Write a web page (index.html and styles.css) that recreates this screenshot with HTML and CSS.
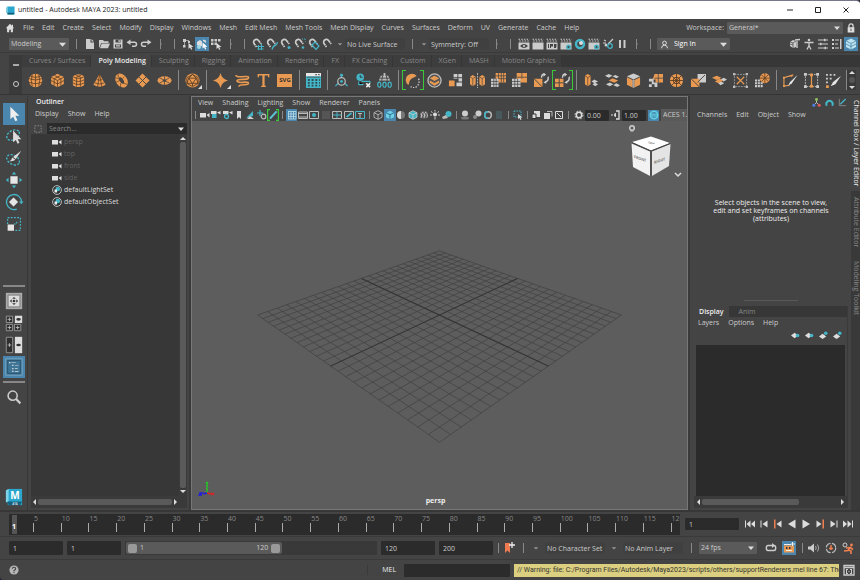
FILE: index.html
```html
<!DOCTYPE html>
<html lang="en">
<head>
<meta charset="utf-8">
<title>untitled - Autodesk MAYA 2023: untitled</title>
<link rel="stylesheet" href="styles.css">
</head>
<body>
<svg class="sprite" aria-hidden="true">
  <!-- general -->
  <symbol id="arrow" viewBox="0 0 8 8"><path fill="#ddd" d="M0 2h8L4 6.500z"/></symbol>
  <symbol id="caret" viewBox="0 0 8 8"><path fill="#999" d="M1 3h6L4 6z"/></symbol>
  <symbol id="home" viewBox="0 0 12 12"><path fill="#ddd" d="M6 1 1 6.200h1.500V11h2.500V8h2v3h2.500V6.200H11L9.600 4.700V2H8.300v1.400z"/></symbol>
  <symbol id="lock" viewBox="0 0 12 12"><path fill="none" stroke="#ddd" stroke-width="1.500" d="M3.500 6V3.500a2.500 2.500 0 0 1 5 0V6"/><path fill="#ddd" d="M2 5h8v6.500H2z"/><path fill="#444" d="M5.500 7h1v2.500h-1z"/></symbol>
  <symbol id="logo" viewBox="0 0 20 20"><path fill="#1a86a8" d="M1 4 4 1v15l-3-1z"/><path fill="#2ba6cc" d="M3 1h16v18H3z"/><path fill="#7fd3e8" d="M1 2.500 4 1v14l-3 1z"/><path fill="#14607d" d="M3 15h16l-2 4H4z"/></symbol>
  <!-- status line -->
  <symbol id="new" viewBox="0 0 12 12"><path fill="#ccc" d="M2 1h4.500v3.500H10V11H2zM7.500 1 10 3.500H7.500z"/></symbol>
  <symbol id="open" viewBox="0 0 12 12"><path fill="#ccc" d="M1 2h4l1 1.200h4.500V5H3.200L1.500 9.500H1z"/><path fill="#ccc" d="M3.700 5.600H12L10 10.200H2z"/></symbol>
  <symbol id="save" viewBox="0 0 12 12"><path fill="#ccc" d="M1.500 1.500h9v9h-9z"/><path fill="#444" d="M3.500 1.500h5v3h-5zM3 6.500h6v3H3z"/><path fill="#ccc" d="M6.500 2h1.200v2H6.500zM4 7.300h4v.6H4zM4 8.500h4v.6H4z"/></symbol>
  <symbol id="undo" viewBox="0 0 12 12"><path fill="none" stroke="#ccc" stroke-width="1.500" d="M3 4.200h5.500q2 0 2 2t-2 2H6"/><path fill="#ccc" d="M.5 4.200 4.500 1.500V7z"/></symbol>
  <symbol id="redo" viewBox="0 0 12 12"><path fill="none" stroke="#ccc" stroke-width="1.500" d="M9 4.200H3.500q-2 0-2 2t2 2H6"/><path fill="#ccc" d="M11.500 4.200 7.500 1.500V7z"/></symbol>
  <symbol id="sel1" viewBox="0 0 12 12"><path fill="#ccc" d="M1 1h3v3H1zM1 7h2.500v2.500H1zM6 3h2v2H6z"/><path stroke="#ccc" stroke-width=".7" fill="none" d="M2.500 3v5M3 2.500h4"/><path fill="#ddd" d="m6.500 5 5 4H9.300l1 2.300-1.200.5-1-2.300L6.500 11z"/></symbol>
  <symbol id="sel2" viewBox="0 0 12 12"><path fill="#ddd" d="M1 7V4l3-2 2 1.500V8L3 9zM7 3V1.500l3 1V5L8.500 4z"/><circle cx="3" cy="9" r="2" fill="#9fd6e6"/><path fill="#fff" d="m6.500 4.500 5 4.200H9.300l1 2.300-1.200.5-1-2.300-1.600 1.300z"/></symbol>
  <symbol id="sel3" viewBox="0 0 12 12"><path fill="#ccc" d="M1 1h2.500v2.500H1zM4.500 1H7v2.500H4.500zM8 1h2.500v2.500H8zM1 4.500h2.500V7H1zM4.500 4.500H7V7H4.500z"/><path fill="#ddd" d="m6.500 5 5 4H9.300l1 2.300-1.200.5-1-2.300L6.500 11z"/></symbol>
  <symbol id="mag" viewBox="0 0 12 12"><path fill="none" stroke="#ccc" stroke-width="1.700" d="M4.500 9 2.200 5.800a2.700 2.700 0 0 1 4.300-3.300L9.200 6"/><path fill="none" stroke="#444" stroke-width=".7" d="m2.600 8.300 2-1.500M7.300 5.600l2-1.500"/></symbol>
  <symbol id="maggrid" viewBox="0 0 12 12"><use href="#mag"/><path stroke="#44b5c6" fill="none" d="M5 8.500h7M5.500 11h6M6.500 7v5M9.500 6v6"/></symbol>
  <symbol id="magcurve" viewBox="0 0 12 12"><use href="#mag"/><path stroke="#44b5c6" stroke-width="1.300" fill="none" d="M6 11.500Q7 8 9 7.500T11.500 4"/></symbol>
  <symbol id="magpoint" viewBox="0 0 12 12"><use href="#mag"/><circle cx="9" cy="9.500" r="1.500" fill="#44b5c6"/></symbol>
  <symbol id="magcenter" viewBox="0 0 12 12"><use href="#mag"/><circle cx="9" cy="9.500" r="1.300" fill="#44b5c6"/><path stroke="#44b5c6" stroke-dasharray="1 1" d="M8 1h4v4" fill="none"/></symbol>
  <symbol id="magplane" viewBox="0 0 12 12"><use href="#mag"/><path stroke="#44b5c6" stroke-width="1.200" fill="none" d="m4 7 3-3 4 4-3 3.500z"/></symbol>
  <symbol id="clap" viewBox="0 0 12 12"><path fill="#ccc" d="M.5 4.500h11v7H.500z"/><path stroke="#ccc" stroke-width="1.100" stroke-dasharray="1.500 1.200" d="M.5 1.200h11M1.200 3h10.500"/></symbol>
  <symbol id="clapeye" viewBox="0 0 12 12"><use href="#clap"/><path fill="#444" d="M2 8q4-4 8 0-4 4-8 0z"/><circle cx="6" cy="8" r="1" fill="#ddd"/></symbol>
  <symbol id="clapipr" viewBox="0 0 12 12"><use href="#clap"/><path fill="#444" d="M2 6h1v4H2zM4 6h3v2.500H5V10H4zM8 6h2.500v2L10 10H8z"/></symbol>
  <symbol id="clapset" viewBox="0 0 12 12"><use href="#clap"/><circle cx="8.500" cy="9" r="2.500" fill="#44b5c6"/><circle cx="8.500" cy="9" r="1" fill="#444"/></symbol>
  <symbol id="hyper" viewBox="0 0 12 12"><circle cx="6" cy="6" r="4" fill="none" stroke="#44b5c6" stroke-width="2.500"/><circle cx="7" cy="5" r="2" fill="#ddd"/></symbol>
  <symbol id="lights" viewBox="0 0 12 12"><path stroke="#ccc" stroke-width="1.200" d="m11 1-5 5M1 5h3M2 2l2 1"/><circle cx="4" cy="7" r="1.500" fill="#ccc"/><circle cx="8" cy="8" r="2.300" fill="none" stroke="#44b5c6" stroke-width="1.300"/></symbol>
  <symbol id="pause" viewBox="0 0 12 12"><path fill="#ccc" d="M3 2h2v8H3zM7.500 2h2v8h-2z"/></symbol>
  <symbol id="user" viewBox="0 0 12 12"><path fill="none" stroke="#ddd" stroke-width="1.300" d="M2 11q0-4 4-4t4 4"/><circle cx="6" cy="4" r="2.500" fill="none" stroke="#ddd" stroke-width="1.300"/></symbol>
  <symbol id="toolkit" viewBox="0 0 12 12"><path fill="#ccc" d="m1 4 3-2 3 1v6L4 10 1 8z"/><path stroke="#444" stroke-width=".7" fill="none" d="M1 4l3 1 3-2M4 5v5M1 6l3 1"/><path fill="none" stroke="#ccc" stroke-width="1.400" d="M8 10V3M6 2l5-.5"/></symbol>
  <symbol id="human" viewBox="0 0 12 12"><circle cx="6" cy="2" r="1.300" fill="#ccc"/><path stroke="#ccc" stroke-width="1.300" fill="none" d="M1.500 4.500h9M6 4v3.500L4 11.500M6 7.500l2 4"/></symbol>
  <symbol id="attr" viewBox="0 0 12 12"><path stroke="#ccc" fill="none" d="M1 2h10M1 6h10M1 10h10"/><path fill="#ccc" d="M7 .7h1.500v2.600H7zM3 4.700h1.500v2.600H3zM7.500 8.700H9v2.600H7.500z"/></symbol>
  <symbol id="toolset" viewBox="0 0 12 12"><path fill="#ccc" d="M1 1h2v2H1zM1 5h2v2H1zM1 9h2v2H1zM4 1.500h4v1H4zM4 5.500h3v1H4zM4 9.500h4v1H4zM9 1h1.500v10H9z"/></symbol>
  <symbol id="chbox" viewBox="0 0 12 12"><path fill="#bfe3ef" d="m6 .5 5 2.500v6L6 11.500 1 9V3z"/><path stroke="#4a86ae" stroke-width=".8" fill="none" d="m1 3 5 2.500L11 3M6 5.500v6M1 6l5 2.500L11 6"/></symbol>
  <!-- shelf -->
  <symbol id="sphere" viewBox="0 0 16 16"><circle cx="8" cy="8" r="7.200" fill="#e99a52"/><path stroke="#553a22" stroke-width=".8" fill="none" d="M1 6q7 3 14 0M1 10q7 3 14 0M2.500 3.500Q8 6 13.500 3.500M8 1v14M4.500 2q-2 6 0 12M11.500 2q2 6 0 12"/></symbol>
  <symbol id="cube" viewBox="0 0 16 16"><path fill="#e99a52" d="m8 .8 6.800 3.500v7.500L8 15.200l-6.800-3.400V4.300z"/><path stroke="#553a22" stroke-width=".8" fill="none" d="M1 4.300 8 8l7-3.700M8 8v7M1 8l7 3.700L15 8M4.600 2.500l7 3.700v7M11.400 2.500l-7 3.700v7"/></symbol>
  <symbol id="cyl" viewBox="0 0 16 16"><path fill="#e99a52" d="M2 3.500q6-4.500 12 0v9.500q-6 4-12 0z"/><path stroke="#553a22" stroke-width=".8" fill="none" d="M2 4q6 3.500 12 0M2 7.300q6 3.500 12 0M2 10.500q6 3.500 12 0M6 5.500v9M10 5.500v9M5 2l6 3M11 2 5 5"/></symbol>
  <symbol id="cone" viewBox="0 0 16 16"><path fill="#e99a52" d="m8 1 6.500 11.500Q8 17 1.500 12.500z"/><path stroke="#553a22" stroke-width=".8" fill="none" d="M5 7q3 1.500 6 0M3 10.500q5 2.500 10 0M8 1 6 15M8 1l2.500 14"/></symbol>
  <symbol id="torus" viewBox="0 0 16 16"><ellipse cx="8" cy="8" rx="4" ry="6" transform="rotate(-35 8 8)" fill="none" stroke="#e99a52" stroke-width="4"/><path stroke="#553a22" stroke-width=".7" d="m1 5 4 1M4 1l1 4M11 4 9 6M2 10l4-2M7 15l0-4M14 12l-4-1"/></symbol>
  <symbol id="plane" viewBox="0 0 16 16"><path fill="#e99a52" d="m8 .5 7.500 7.500L8 15.500.500 8z"/><path stroke="#444" d="m4.300 4.300 7.500 7.500M11.700 4.300l-7.500 7.500"/></symbol>
  <symbol id="disc" viewBox="0 0 16 16"><ellipse cx="8" cy="8" rx="7.500" ry="4.500" fill="#e99a52"/><path stroke="#444" stroke-width=".8" d="M8 3.500v9M2.500 5l11 6M13.500 5l-11 6"/><ellipse cx="8" cy="8" rx="2" ry="1.200" fill="#444"/></symbol>
  <symbol id="plato" viewBox="0 0 16 16"><circle cx="8" cy="8" r="7.500" fill="#e99a52"/><path stroke="#553a22" stroke-width=".9" fill="none" d="M8 1.500 14 5v6l-6 3.500L2 11V5zM4 5.500h8l-4 6zM8 1.500 4 5.500 2 11h6M8 1.500l4 4 2 5.500H8v3"/></symbol>
  <symbol id="star" viewBox="0 0 16 16"><path fill="#e99a52" d="M8 0q1.500 6.500 8 8-6.500 1.500-8 8-1.500-6.500-8-8 6.500-1.500 8-8z"/></symbol>
  <symbol id="helix" viewBox="0 0 16 16"><path fill="none" stroke="#e99a52" stroke-width="1.700" d="M1 2q0 2.500 6 2t7 0q2 3-5 2.800T2 8.500q1 2 6 1.500t6 0q1.500 2.500-4 2.500t-6 2"/></symbol>
  <symbol id="type" viewBox="0 0 16 16"><path fill="none" stroke="#e99a52" stroke-width="1.500" d="M2.500 4.500V1.800h11v2.700M5.500 14.300h5"/><path fill="#e99a52" d="M6.800 1.500h2.400v13H6.800z"/></symbol>
  <symbol id="svgbox" viewBox="0 0 16 16"><path fill="#e99a52" d="M0 1h16v14H0z"/></symbol>
  <symbol id="sheet" viewBox="0 0 16 16"><path fill="#44b5c6" d="M0 0h16v16H0z"/><path fill="#e8e8e8" d="M0 0h16v3.500H0z"/><path fill="#444" d="M10 1h1.500v1.500H10zM13 1h1.500v1.500H13zM1 4h14v.8H1z"/><path stroke="#2f4a50" stroke-width="2" stroke-dasharray="2 2" d="M2 7.500h13M2 10.500h13M2 13.500h13"/></symbol>
  <symbol id="pivot" viewBox="0 0 16 16"><path stroke="#44b5c6" stroke-width="1.400" fill="none" d="M8 5V1M5 10.500 1.500 14M11 10.500l3.500 3.500M8 1 6.500 3M8 1l1.500 2"/><circle cx="8" cy="9" r="4" fill="none" stroke="#bbb" stroke-width="1.300"/><circle cx="8" cy="9" r="1.500" fill="#44b5c6"/></symbol>
  <symbol id="history" viewBox="0 0 16 16"><circle cx="4.500" cy="4.500" r="4" fill="#44b5c6"/><path stroke="#333" fill="none" d="M4.500 2v2.500h2.500"/><path stroke="#44b5c6" stroke-width="1.300" d="M6 9h9M3 9v3.500h5M15 9v2"/><path stroke="#eee" stroke-width="1.700" d="m11 11 4 4M15 11l-4 4"/></symbol>
  <symbol id="freeze" viewBox="0 0 16 16"><path fill="#bbb" d="M4 3h8l2 5H2zM7 0h2v3H7z"/><path stroke="#444" d="M6 3 5 8M10 3l1 5M3 5.500h10"/><g fill="none" stroke="#44b5c6" stroke-width="1.300"><ellipse cx="2.500" cy="12.500" rx="1.700" ry="2.700"/><ellipse cx="8" cy="12.500" rx="1.700" ry="2.700"/><ellipse cx="13.500" cy="12.500" rx="1.700" ry="2.700"/></g></symbol>
  <symbol id="sweep" viewBox="0 0 16 16"><path fill="#e99a52" d="M12.500 3.200Q9.500-.3 5 1.200T.8 8.500Q1.500 12 4 12.500 4 8.500 6.500 6.500t6-3.300z"/><path stroke="#ccc" stroke-width="1.500" stroke-dasharray="1.500 1.500" fill="none" d="M14.500 6q1.500 5-1.500 8T6 14.500"/></symbol>
  <symbol id="smooth" viewBox="0 0 16 16"><circle cx="8" cy="8" r="7" fill="#555" stroke="#bbb" stroke-width="1.400"/><path fill="#e99a52" d="m8 3 5 2.500L8 8.500 3 5.500z"/><path fill="#e99a52" d="m3 8 5 2.700L13 8v2.500l-5 3-5-3z"/></symbol>
  <symbol id="combine" viewBox="0 0 16 16"><path fill="#ccc" d="M6 1h9v8h-4V6H6zM9 10h6v4H9z"/><path fill="#e99a52" d="M1 8h6v6H1z"/><path stroke="#444" d="M10.500 1v9M6 5h9"/></symbol>
  <symbol id="mirror" viewBox="0 0 16 16"><path fill="#e99a52" d="m0 4 3-2 3 2v8l-3 2-3-2zM10 4l3-2 3 2v8l-3 2-3-2z"/><path stroke="#444" stroke-width=".7" fill="none" d="m0 4 3 2 3-2M3 6v8M10 4l3 2 3-2M13 6v8"/><path stroke="#bbb" stroke-dasharray="2 1" d="M8 0v16"/></symbol>
  <symbol id="fill" viewBox="0 0 16 16"><path fill="#e99a52" d="M5 0h11v10H5z"/><path fill="#ccc" d="M0 6h8v9H0z"/><path stroke="#444" stroke-width=".8" d="M8 0v6M11 0v10M13.500 0v10M5 3h11M8 6h8M0 9h8M0 12h8M3 6v9M5.500 6v9"/></symbol>
  <symbol id="reduce" viewBox="0 0 16 16"><path fill="#e99a52" d="M5 0h11v10H5z"/><path fill="#ccc" d="M0 6h9v9H0z"/><path stroke="#444" stroke-width=".8" d="M10.500 0v6M5 4.500h11M0 9h9M0 12h9M3 6v9M6 6v9"/></symbol>
  <symbol id="remesh" viewBox="0 0 16 16"><path fill="#e99a52" d="M0 6h9v9H0z"/><path stroke="#444" d="m0 6 9 9"/><path stroke="#ccc" stroke-width="1.500" fill="none" d="M8 5q0-4 3.500-4M15 4q1 4-3 6"/><path fill="#ccc" d="m10 0 3 1.500L10 4zM13 8v3.500L10 10z"/></symbol>
  <symbol id="retopo" viewBox="0 0 16 16"><path fill="#e99a52" d="M0 6h9v9H0z"/><path stroke="#444" d="M4.500 6v9M0 10.500h9"/><path stroke="#ccc" stroke-width="1.500" fill="none" d="M8 5q0-4 3.500-4M15 4q1 4-3 6"/><path fill="#ccc" d="m10 0 3 1.500L10 4zM13 8v3.500L10 10z"/></symbol>
  <symbol id="extrude" viewBox="0 0 16 16"><path fill="#e99a52" d="m1 3 3-2 3 2v9l-3 2-3-2z"/><path stroke="#553a22" stroke-width=".7" fill="none" d="m1 3 3 2 3-2M4 5v9"/><path fill="#ccc" d="m11 7 4 2-4 2-3-2zM9 12l3-1.500 3 1.500-3 2z"/></symbol>
  <symbol id="bridge" viewBox="0 0 16 16"><path fill="#ccc" d="m4 1 4 2-4 2-4-2zM11 2l4 2-3 1.500-4-2zM5 10l4 2-4 2-4-2zM12 11l4 2-3 2-4-2z"/><path fill="#e99a52" d="m8 5.500 6 2.500-4 2.500L4 8z"/></symbol>
  <symbol id="bevel" viewBox="0 0 16 16"><path fill="#ccc" d="m8 .5 7 3L8 7 1 3.500z"/><path fill="#e99a52" d="m1 4.500 6 3v8l-6-3zM9 7.500l6-3v8l-6 3z"/><path fill="#fff" d="m7 7.500 1-.5 1 .5v8l-1 .5-1-.5z" opacity=".5"/></symbol>
  <symbol id="boolean" viewBox="0 0 16 16"><path fill="#e99a52" d="M7 1h9v9H8V7H5z"/><path fill="#ccc" d="M1 6h5v4h4v5H7v-3H4v3H1v-3h3V9H1z"/><path stroke="#444" stroke-width=".8" d="M11 1v9M7 5.500h9"/></symbol>
  <symbol id="circularize" viewBox="0 0 16 16"><circle cx="8" cy="8" r="7" fill="#e99a52"/><circle cx="8" cy="8" r="3.500" fill="none" stroke="#553a22"/><path stroke="#553a22" stroke-width=".9" d="M8 1v14M1 8h14M3 3l10 10M13 3 3 13"/></symbol>
  <symbol id="tri" viewBox="0 0 16 16"><path fill="#ccc" d="M7 1h9v9H7z"/><path fill="#e99a52" d="M0 6h9v9H0z"/><path stroke="#444" d="m0 6 9 9M15 2l-8 8"/></symbol>
  <symbol id="append" viewBox="0 0 16 16"><path fill="#ccc" d="m9 7 3.500-2L16 7l-3.500 2zM6 10l3-1.500L13 11l-4 2z"/><path fill="#e99a52" d="m5 3 5 2-5 2.500L0 5zM3 9l5-3 4 2-5 3z"/></symbol>
  <symbol id="collapse" viewBox="0 0 16 16"><path fill="none" stroke="#999" stroke-dasharray="2 1" d="M1.500 1.500h13v13h-13z"/><path fill="#bbb" d="M0 0h2.500v2.500H0zM13.500 0H16v2.500h-2.500zM0 13.500h2.500V16H0zM13.500 13.500H16V16h-2.500z"/><path stroke="#e99a52" stroke-width="1.200" d="m4 4 8 8M12 4l-8 8"/></symbol>
  <symbol id="project" viewBox="0 0 16 16"><circle cx="10.500" cy="5.500" r="5.300" fill="#e99a52"/><path stroke="#553a22" stroke-width=".8" d="M10.500 0v11M5 5.500h11M7 2l7 7M14 2 7 9"/><path stroke="#ccc" stroke-width="2.200" stroke-dasharray="2.200 .8" d="M0 8h6M0 11h9M0 14h9"/></symbol>
  <symbol id="multicut" viewBox="0 0 16 16"><path stroke="#e99a52" stroke-width="1.200" fill="none" d="M1 14V5l10-3M1 14l6-1"/><path fill="#e99a52" d="M0 4h2v2H0zM0 13h2v2H0zM8 2h2v2H8z"/><path fill="#e5e5e5" d="m15.500 2-6 9-4 2.500 2-4z"/></symbol>
  <symbol id="connect" viewBox="0 0 16 16"><path fill="none" stroke="#bbb" stroke-dasharray="2 1" d="M1.500 1.500h13v13h-13z"/><path fill="#ccc" d="M0 0h3v3H0zM13 0h3v3h-3zM0 13h3v3H0zM13 13h3v3h-3z"/><path stroke="#e99a52" stroke-width="1.300" d="M8 3v10"/><circle cx="8" cy="2" r="1.800" fill="#e99a52"/><circle cx="8" cy="14" r="1.800" fill="#e99a52"/></symbol>
  <symbol id="quaddraw" viewBox="0 0 16 16"><path fill="#ccc" d="M0 1h2v2H0zM4 1h2v2H4zM8 1h2v2H8zM0 5h2v2H0zM4 5h2v2H4zM0 9h2v2H0z"/><path fill="#e99a52" d="M0 13h3v3H0z"/><path fill="#e5e5e5" d="m16 3-6 9-5 2 2.500-4.500z"/></symbol>
  <!-- viewport bar -->
  <symbol id="cam" viewBox="0 0 10 10"><path fill="#ddd" d="M0 3h6v4.500H0zM6.500 5 9.500 3v4.500z"/></symbol>
  <symbol id="camlock" viewBox="0 0 10 10"><path fill="#ddd" d="M0 1h5.500v3H0zM6 2.500 9.500 1v3.500z"/><path fill="#44b5c6" d="M1 4h4.500v4H1z"/></symbol>
  <symbol id="camattr" viewBox="0 0 10 10"><path fill="#ddd" d="M0 1h5.500v3H0zM6 2.500 9.500 1v3.500z"/><circle cx="3.500" cy="6.500" r="2" fill="none" stroke="#44b5c6" stroke-width="1.300"/></symbol>
  <symbol id="mark" viewBox="0 0 10 10"><path fill="#ddd" d="M3 1h4v8L5 7 3 9z"/></symbol>
  <symbol id="imgplane" viewBox="0 0 10 10"><path fill="#44b5c6" d="M1 8 8 1v5z"/><path fill="#ccc" d="m2 9 3-3 4 3z"/></symbol>
  <symbol id="panzoom" viewBox="0 0 10 10"><path stroke="#44b5c6" d="M0 3h6M3 0v6" stroke-width="1.200"/><circle cx="6.500" cy="6.500" r="2.300" fill="none" stroke="#bbb" stroke-width="1.200"/></symbol>
  <symbol id="grease" viewBox="0 0 10 10"><path stroke="#3cc83c" fill="none" d="M2.500.500h-2v9h2M7.500.500h2v9h-2"/><path stroke="#5cc4d4" stroke-width="1.700" d="M2.500 8 8 2"/></symbol>
  <symbol id="gridon" viewBox="0 0 10 10"><path stroke="#b9ddea" fill="none" d="M1 1.500h8M1 4h8M1 6.500h8M1 9h8M1.500 1v8M4 1v8M6.500 1v8M9 1v8" stroke-width=".8"/></symbol>
  <symbol id="gate" viewBox="0 0 10 10"><path stroke="#bbb" fill="none" d="M.5 2h9v6.500h-9zM.5 3.500h9M.5 7h9"/></symbol>
  <symbol id="gate2" viewBox="0 0 10 10"><path stroke="#bbb" fill="none" d="M.5 1.500h9v7h-9z"/><circle cx="5" cy="5" r="2" fill="#44b5c6"/></symbol>
  <symbol id="dimsq" viewBox="0 0 10 10"><path fill="#555" d="M1 1h8v8H1z"/></symbol>
  <symbol id="chart" viewBox="0 0 10 10"><path stroke="#bbb" fill="none" d="M.5 1.500h9v7h-9z"/><path stroke="#44b5c6" d="M5 2v6M1 5h8"/></symbol>
  <symbol id="action" viewBox="0 0 10 10"><path stroke="#bbb" fill="none" d="M.5 1.500h9v7h-9z"/><path stroke="#44b5c6" stroke-width="1.700" d="m2.500 7 5-4"/></symbol>
  <symbol id="title" viewBox="0 0 10 10"><path stroke="#44b5c6" fill="none" d="M.5 1.500h9v7h-9z"/><path stroke="#bbb" d="M3 3.500h4M5 3.500V8"/></symbol>
  <symbol id="wire" viewBox="0 0 10 10"><path stroke="#aaa" fill="none" d="m5 .7 4 2v4.600l-4 2-4-2V2.700zM1 2.700l4 2 4-2M5 4.700v4.600"/></symbol>
  <symbol id="shade" viewBox="0 0 10 10"><path fill="#6fd0e4" d="m5 .7 4 2v4.600l-4 2-4-2V2.700z"/><path stroke="#1f5c80" fill="none" stroke-width=".8" d="m1 2.700 4 2 4-2M5 4.700v4.600"/></symbol>
  <symbol id="half" viewBox="0 0 10 10"><circle cx="5" cy="5" r="4" fill="#777"/><path fill="#ddd" d="M5 1a4 4 0 0 0 0 8z"/></symbol>
  <symbol id="tex" viewBox="0 0 10 10"><path fill="#44b5c6" d="m5 .7 4 2v4.600l-4 2-4-2V2.700z"/><path stroke="#ccc" fill="none" stroke-width=".8" d="m5 .7 4 2v4.600l-4 2-4-2V2.700zM1 2.700l4 2 4-2M5 4.700v4.600"/></symbol>
  <symbol id="checker" viewBox="0 0 10 10"><circle cx="5" cy="5" r="4" fill="#555"/><path stroke="#bbb" stroke-width="1.500" stroke-dasharray="1.500 1.500" d="M3 2.500h5M1.500 4h7M2 5.500h7M1.500 7h7"/></symbol>
  <symbol id="light" viewBox="0 0 10 10"><circle cx="5" cy="4.500" r="2" fill="#ddd"/><path stroke="#ccc" d="M5 0v1.500M1 1.500l1.500 1M9 1.500l-1.500 1M0 5h2M8 5h2M5 7v2.500"/></symbol>
  <symbol id="shadow" viewBox="0 0 10 10"><circle cx="6.500" cy="4" r="3" fill="#44b5c6"/><path fill="#bbb" d="m0 7 4-2 2 3-5 1z"/></symbol>
  <symbol id="ao" viewBox="0 0 10 10"><circle cx="5" cy="3.500" r="3" fill="#ccc"/><ellipse cx="5" cy="8" rx="4" ry="1.500" fill="#777"/></symbol>
  <symbol id="blur" viewBox="0 0 10 10"><circle cx="6.500" cy="3.500" r="3" fill="#ccc"/><circle cx="3" cy="7" r="2" fill="#888"/></symbol>
  <symbol id="aa" viewBox="0 0 10 10"><circle cx="5" cy="5" r="3.300" fill="none" stroke="#bbb" stroke-width="1.500"/><path fill="none" stroke="#44b5c6" stroke-width="1.500" d="M5 8.300A3.300 3.300 0 0 1 5 1.700"/></symbol>
  <symbol id="dof" viewBox="0 0 10 10"><path fill="#47595c" d="M2 1h6v8H2z"/></symbol>
  <symbol id="isolate" viewBox="0 0 10 10"><path stroke="#44b5c6" stroke-dasharray="1.500 1" fill="none" d="M1 1h7v6H1z"/><path fill="#ddd" d="m5 4 4.500 3.500H7.500l1 2-1 .5-1-2L5 9z"/></symbol>
  <symbol id="xray" viewBox="0 0 10 10"><path fill="#ddd" d="M3 1h6v6H3z"/><path fill="#ddd" stroke="#333" d="M1 4h4v4.500H1z"/></symbol>
  <symbol id="xray2" viewBox="0 0 10 10"><path stroke="#bbb" fill="none" d="M4 1.500h5v5"/><path fill="#ddd" d="M1 3h6v6H1z"/></symbol>
  <symbol id="xray3" viewBox="0 0 10 10"><path stroke="#ddd" fill="none" d="M1.500 1.500h7v7h-7zM3 3l4 4"/></symbol>
  <symbol id="gear" viewBox="0 0 10 10"><circle cx="5" cy="5" r="2.700" fill="none" stroke="#ddd" stroke-width="1.500"/><circle cx="5" cy="5" r="4" fill="none" stroke="#ddd" stroke-dasharray="1.600 1.540"/></symbol>
  <symbol id="contrast" viewBox="0 0 10 10"><path stroke="#ddd" fill="none" stroke-width="1.300" d="M5 1h3v8H5"/><path fill="#ddd" d="M5 3v4a2 2 0 0 1 0-4zM0 4.500h2v1H0z"/></symbol>
  <symbol id="colormgt" viewBox="0 0 10 10"><circle cx="5" cy="5" r="3.700" fill="none" stroke="#5fd4e4" stroke-width="1.500"/><path stroke="#5fd4e4" d="M2 4.200h6M2 6h6"/></symbol>
  <!-- toolbox -->
  <symbol id="select" viewBox="0 0 22 22"><path fill="#eee" d="m7 3 10 10h-4.500l2.300 5-2.300 1-2.300-5L7 16.500z"/></symbol>
  <symbol id="lasso" viewBox="0 0 22 22"><ellipse cx="10" cy="10" rx="7.500" ry="5" transform="rotate(-30 10 10)" fill="none" stroke="#44b5c6" stroke-width="1.500" stroke-dasharray="2.500 1.500"/><path fill="#ddd" d="m10 5 9 9.500h-4l2 4-2 1-2-4-3 2.500z"/></symbol>
  <symbol id="paint" viewBox="0 0 22 22"><ellipse cx="10" cy="13" rx="7.500" ry="5" transform="rotate(30 10 13)" fill="none" stroke="#44b5c6" stroke-width="1.500" stroke-dasharray="2.500 1.500"/><path fill="#ddd" d="m19 3-6 9-3-2zM9 10.500l3.500 2.500q-2 2-6.500 1.500 2.500-1 3-4z"/></symbol>
  <symbol id="move" viewBox="0 0 22 22"><path fill="#e5e5e5" d="M7 7h8v8H7z"/><path fill="#44b5c6" d="m11 2 2.500 3h-5zM11 20l2.500-3h-5zM2 11l3-2.500v5zM20 11l-3-2.500v5z"/></symbol>
  <symbol id="rotate" viewBox="0 0 22 22"><path fill="none" stroke="#44b5c6" stroke-width="1.400" d="M14 18.800A8.300 8.300 0 1 1 19.300 11v1"/><path fill="#44b5c6" d="m16.500 10.500 2.500 3 2.500-3z"/><path fill="#e5e5e5" d="m10.500 6 5 5-5 5-5-5z"/></symbol>
  <symbol id="scale" viewBox="0 0 22 22"><path fill="none" stroke="#44b5c6" stroke-width="1.300" stroke-dasharray="2 1.500" d="M4 11V4h14v14h-7M11 11h3V8"/><path fill="#e5e5e5" d="M4 11.500h7v7H4z"/></symbol>
  <symbol id="lay1" viewBox="0 0 22 22"><path fill="#aaa" d="M2 2h18v18H2z"/><path fill="#ddd" stroke="#777" d="M4.500 4.500h13v13h-13z"/><circle cx="11" cy="11" r="1.500" fill="#333"/><path fill="#333" d="m11 6.500 2 2H9zM11 15.500l2-2H9zM6.500 11l2-2v4zM15.500 11l-2-2v4z"/></symbol>
  <symbol id="lay4" viewBox="0 0 22 22"><path fill="#2f2f2f" stroke="#999" d="M2.500 3.500h7v7h-7zM2.500 12.500h7v7h-7zM11.500 12.500h7v7h-7z"/><path fill="#ddd" d="M12 3h8v8h-8z"/><path stroke="#bbb" d="M4 7h4M6 5v4M4 16h4M6 14v4M13 16h4M15 14v4"/><ellipse cx="16" cy="7" rx="2.500" ry="1.500" fill="#333"/></symbol>
  <symbol id="lay2" viewBox="0 0 22 22"><path fill="#2f2f2f" stroke="#999" d="M2.500 2.500h7v17h-7z"/><path fill="#ddd" d="M12 2h8v18h-8z"/><path stroke="#bbb" d="M4 11h4M6 9v4"/><ellipse cx="16" cy="11" rx="2.500" ry="1.500" fill="#333"/></symbol>
  <symbol id="layout" viewBox="0 0 22 22"><path fill="#3f7596" stroke="#8ab4cc" stroke-width=".8" d="M2 2h18v18H2z"/><path fill="none" stroke="#27536e" d="M4 4h14v14H4z"/><path fill="#ddd" d="M5.500 5.500H7V7H5.500zM9 8.500h1.500V10H9zM9 12h1.500v1.500H9zM9 15h1.500v1.500H9zM12 9h4v.7h-4zM12 12.500h3v.7h-3zM12 15.500h4v.7h-4zM8 6h5v.7H8z"/></symbol>
  <symbol id="find" viewBox="0 0 22 22"><circle cx="9.500" cy="9.500" r="5" fill="none" stroke="#ccc" stroke-width="1.700"/><path stroke="#ccc" stroke-width="2.500" d="m13 13 5 5"/></symbol>
  <symbol id="filter" viewBox="0 0 10 10"><path stroke="#888" stroke-width="1.200" stroke-dasharray="2 1.500" fill="none" d="M1 1h8v8H1z"/></symbol>
  <symbol id="set" viewBox="0 0 10 10"><circle cx="5" cy="5" r="4.400" fill="#333" stroke="#bbb"/><circle cx="5.800" cy="4" r="2.300" fill="#44b5c6"/><path fill="#eee" d="M2.500 4.500H5v3H2.500z"/></symbol>
  <!-- right panel -->
  <symbol id="axes" viewBox="0 0 10 10"><path stroke="#ccc" d="M5 5V2M5 5 2 8M5 5l3 3"/><circle cx="5" cy="1.700" r="1.600" fill="#8fc85a"/><circle cx="2" cy="8" r="1.700" fill="#4a80e0"/><circle cx="8" cy="8" r="1.700" fill="#e05a5a"/></symbol>
  <symbol id="dial" viewBox="0 0 10 10"><path fill="none" stroke="#44b5c6" stroke-width="2.200" d="M2 8.500A3.500 3.500 0 1 1 8 8.500"/></symbol>
  <symbol id="graph" viewBox="0 0 10 10"><path fill="none" stroke="#888" d="M1.500 1v7.500H9"/><path stroke="#44b5c6" stroke-width="1.500" d="m2.500 7 6-6"/></symbol>
  <symbol id="layer" viewBox="0 0 10 10"><path fill="#ddd" d="m0 5 4-3 4 3-4 3z"/><circle cx="7.300" cy="5" r="2" fill="#44b5c6"/></symbol>
  <symbol id="layerup" viewBox="0 0 10 10"><path fill="#ddd" d="m0 6 4-3 4 3-4 3z"/><circle cx="7.500" cy="2.500" r="2" fill="#44b5c6"/></symbol>
  <!-- playback -->
  <symbol id="pfirst" viewBox="0 0 12 12"><path fill="#ddd" d="M1 2.500h1v7H1zM6.500 2.500v7L2.500 6zM11 2.500v7L7 6z"/></symbol>
  <symbol id="pprev" viewBox="0 0 12 12"><path fill="#ddd" d="M2.500 2.500h1v7h-1zM9.500 2.500v7L4.500 6z"/></symbol>
  <symbol id="pkey" viewBox="0 0 12 12"><path fill="#f08050" d="M2 1.500h1.500v9H2z"/><path fill="#ddd" d="M9.500 2.500v7L4.500 6z"/></symbol>
  <symbol id="pplay" viewBox="0 0 12 12"><path fill="#ddd" d="M2.500 1.500v9l7.500-4.500z"/></symbol>
  <symbol id="autokey" viewBox="0 0 12 12"><path fill="#f07a50" d="M2 1h5v10L4.500 8.500 2 11z"/><path stroke="#eee" stroke-width="1.300" d="M9 0v6M6 3h6"/></symbol>
  <symbol id="loop" viewBox="0 0 12 12"><path fill="none" stroke="#ccc" stroke-width="1.400" d="M9 3.500H3Q1.300 3.500 1.300 6T3 8.500M3 8.500h6q1.700 0 1.700-2.500T9 3.500"/><path fill="#ccc" d="M7 1v5l3-2.500z"/></symbol>
  <symbol id="cached" viewBox="0 0 12 12"><path fill="#e99a52" d="M1 3.500h10v7H1z"/><path stroke="#eee" fill="none" d="M1 2.500h7M3 8.500h6M9.500 0v4M8 2h4"/><path fill="#334" d="M3 5h1.500v2H3zM6 5h1.500v2H6z"/></symbol>
  <symbol id="sound" viewBox="0 0 12 12"><path fill="#ccc" d="M0 4.500h2.500L6 1.500v9L2.500 7.500H0z"/><path stroke="#aaa" fill="none" d="M7.500 4q1.500 2 0 4M9.500 2.500q2.500 3.500 0 7"/></symbol>
  <symbol id="time" viewBox="0 0 12 12"><circle cx="6" cy="6" r="4.700" fill="none" stroke="#bbb" stroke-width="1.200" stroke-dasharray="6 1.500"/><path stroke="#f08050" stroke-width="1.400" d="M6 3v5M4 6.500h4"/></symbol>
  <symbol id="run" viewBox="0 0 12 12"><circle cx="3" cy="3" r="2" fill="none" stroke="#ccc"/><circle cx="9.500" cy="3" r="1.400" fill="#f08050"/><path stroke="#f08050" stroke-width="1.600" fill="none" d="m4 6 4-.5-2 3-4 .5M6.500 8 9 9v3M8 5.500l3 2"/></symbol>
  <symbol id="help" viewBox="0 0 12 12"><circle cx="6" cy="6" r="5.500" fill="#b5b5b5"/><path stroke="#444" stroke-width="1.400" fill="none" d="M4 4.500q0-1.800 2-1.800t2 1.700Q8 5.500 6 6.500v1"/><path fill="#444" d="M5.300 8.300h1.400v1.400H5.300z"/></symbol>
  <symbol id="script" viewBox="0 0 12 12"><path fill="none" stroke="#ccc" stroke-width="1.300" d="M1 1.500h10v9.500H1zM1 3.500h10"/><path fill="#ccc" d="M3 5h2v1H4v3h1v1H3zM9 5H7v1h1v3H7v1h2zM5.500 7h1v1h-1z"/></symbol>
</svg>

<div class="window">
  <header class="titlebar">
    <svg class="app-icon" aria-hidden="true"><use href="#logo"/></svg>
    <h1>untitled - Autodesk MAYA 2023: untitled</h1>
    <button aria-label="Minimize"><svg viewBox="0 0 8 8"><path d="M1 4h6"/></svg></button>
    <button aria-label="Maximize"><svg viewBox="0 0 8 8"><path d="M1.500 1.500h5v5h-5z"/></svg></button>
    <button aria-label="Close"><svg viewBox="0 0 8 8"><path d="m1.500 1.500 5 5M6.500 1.500l-5 5"/></svg></button>
  </header>

  <nav class="menubar" aria-label="Main menu">
    <button class="home" aria-label="Home"><svg><use href="#home"/></svg></button>
    <button>File</button><button>Edit</button><button>Create</button><button>Select</button><button>Modify</button><button>Display</button><button>Windows</button><button>Mesh</button><button>Edit Mesh</button><button>Mesh Tools</button><button>Mesh Display</button><button>Curves</button><button>Surfaces</button><button>Deform</button><button>UV</button><button>Generate</button><button>Cache</button><button>Help</button>
    <label class="workspace-label" for="workspace">Workspace:</label>
    <span class="select workspace"><select id="workspace"><option>General*</option></select><svg><use href="#arrow"/></svg></span>
    <button class="lock" aria-label="Lock workspace"><svg><use href="#lock"/></svg></button>
  </nav>

  <div class="statusline">
    <span class="select mode"><select aria-label="Menu set"><option>Modeling</option></select><svg><use href="#arrow"/></svg></span>
    <i class="bar"></i>
    <button aria-label="New scene"><svg><use href="#new"/></svg></button>
    <button aria-label="Open scene"><svg><use href="#open"/></svg></button>
    <button aria-label="Save scene"><svg><use href="#save"/></svg></button>
    <button aria-label="Undo"><svg><use href="#undo"/></svg></button>
    <button aria-label="Redo"><svg><use href="#redo"/></svg></button>
    <i class="bar end"></i><i class="bar"></i>
    <button aria-label="Select by hierarchy"><svg><use href="#sel1"/></svg></button>
    <button class="on" aria-label="Select by object"><svg><use href="#sel2"/></svg></button>
    <button aria-label="Select by component"><svg><use href="#sel3"/></svg></button>
    <i class="bar end"></i><i class="bar"></i>
    <button aria-label="Snap to grids"><svg><use href="#maggrid"/></svg></button>
    <button aria-label="Snap to curves"><svg><use href="#magcurve"/></svg></button>
    <button aria-label="Snap to points"><svg><use href="#magpoint"/></svg></button>
    <button aria-label="Snap to center"><svg><use href="#magcenter"/></svg></button>
    <button aria-label="Snap to planes"><svg><use href="#magplane"/></svg></button>
    <button aria-label="Make live"><svg><use href="#mag"/></svg></button>
    <button class="mini" aria-label="Live surface menu"><svg><use href="#caret"/></svg></button>
    <input class="readout" aria-label="Live surface" value="No Live Surface" readonly>
    <i class="bar"></i>
    <button class="mini" aria-label="Symmetry menu"><svg><use href="#caret"/></svg></button>
    <input class="readout" aria-label="Symmetry" value="Symmetry: Off" readonly>
    <i class="bar end"></i><i class="bar"></i>
    <button aria-label="Render view"><svg><use href="#clapeye"/></svg></button>
    <button aria-label="Render frame"><svg><use href="#clap"/></svg></button>
    <button aria-label="IPR render"><svg><use href="#clapipr"/></svg></button>
    <button aria-label="Render settings"><svg><use href="#clapset"/></svg></button>
    <button aria-label="Hypershade"><svg><use href="#hyper"/></svg></button>
    <button aria-label="Render setup"><svg><use href="#clapset"/></svg></button>
    <button aria-label="Light editor"><svg><use href="#lights"/></svg></button>
    <button aria-label="Pause viewport"><svg><use href="#pause"/></svg></button>
    <i class="bar end"></i><i class="bar"></i>
    <span class="select signin"><svg class="lead"><use href="#user"/></svg><select aria-label="Account"><option>Sign In</option></select><svg><use href="#arrow"/></svg></span>
    <button class="push" aria-label="Modeling toolkit"><svg><use href="#toolkit"/></svg></button>
    <button aria-label="Character controls"><svg><use href="#human"/></svg></button>
    <button aria-label="Attribute editor"><svg><use href="#attr"/></svg></button>
    <button aria-label="Tool settings"><svg><use href="#toolset"/></svg></button>
    <button class="on" aria-label="Channel box"><svg><use href="#chbox"/></svg></button>
  </div>

  <section class="shelf" aria-label="Shelf">
    <div class="shelf-side"><button aria-label="Shelf tabs"><b class="dash"></b></button><button aria-label="Shelf options"><b class="ring"></b></button></div>
    <div class="shelf-body">
      <div class="tabs">
        <button>Curves / Surfaces</button><button class="current">Poly Modeling</button><button>Sculpting</button><button>Rigging</button><button>Animation</button><button>Rendering</button><button>FX</button><button>FX Caching</button><button>Custom</button><button>XGen</button><button>MASH</button><button>Motion Graphics</button>
      </div>
      <div class="shelf-row">
        <div class="tools">
          <button aria-label="Sphere"><svg><use href="#sphere"/></svg></button>
          <button aria-label="Cube"><svg><use href="#cube"/></svg></button>
          <button aria-label="Cylinder"><svg><use href="#cyl"/></svg></button>
          <button aria-label="Cone"><svg><use href="#cone"/></svg></button>
          <button aria-label="Torus"><svg><use href="#torus"/></svg></button>
          <button aria-label="Plane"><svg><use href="#plane"/></svg></button>
          <button aria-label="Disc"><svg><use href="#disc"/></svg></button>
          <i></i>
          <button class="more" aria-label="Platonic solid"><svg><use href="#plato"/></svg></button>
          <i></i>
          <button class="more" aria-label="Super shape"><svg><use href="#star"/></svg></button>
          <button aria-label="Helix"><svg><use href="#helix"/></svg></button>
          <button aria-label="Type"><svg><use href="#type"/></svg></button>
          <button class="svg-tool"><svg aria-hidden="true"><use href="#svgbox"/></svg><span>SVG</span></button>
          <i></i>
          <button aria-label="Content browser"><svg><use href="#sheet"/></svg></button>
          <i></i>
          <button aria-label="Center pivot"><svg><use href="#pivot"/></svg></button>
          <button aria-label="Delete history"><svg><use href="#history"/></svg></button>
          <button aria-label="Freeze transforms"><svg><use href="#freeze"/></svg></button>
          <i></i>
          <button class="fresh" aria-label="Sweep mesh"><svg><use href="#sweep"/></svg></button>
          <button aria-label="Smooth"><svg><use href="#smooth"/></svg></button>
          <button aria-label="Combine"><svg><use href="#combine"/></svg></button>
          <button aria-label="Mirror"><svg><use href="#mirror"/></svg></button>
          <button aria-label="Fill"><svg><use href="#fill"/></svg></button>
          <button aria-label="Reduce"><svg><use href="#reduce"/></svg></button>
          <button aria-label="Remesh"><svg><use href="#remesh"/></svg></button>
          <button class="fresh" aria-label="Retopologize"><svg><use href="#retopo"/></svg></button>
          <i></i>
          <button aria-label="Extrude"><svg><use href="#extrude"/></svg></button>
          <button aria-label="Bridge"><svg><use href="#bridge"/></svg></button>
          <button aria-label="Bevel"><svg><use href="#bevel"/></svg></button>
          <button aria-label="Boolean"><svg><use href="#boolean"/></svg></button>
          <button aria-label="Circularize"><svg><use href="#circularize"/></svg></button>
          <button aria-label="Triangulate"><svg><use href="#tri"/></svg></button>
          <button aria-label="Append"><svg><use href="#append"/></svg></button>
          <button aria-label="Collapse"><svg><use href="#collapse"/></svg></button>
          <button aria-label="Project"><svg><use href="#project"/></svg></button>
          <i></i>
          <button aria-label="Multi-cut"><svg><use href="#multicut"/></svg></button>
          <button aria-label="Connect"><svg><use href="#connect"/></svg></button>
          <button aria-label="Quad draw"><svg><use href="#quaddraw"/></svg></button>
        </div>
        <div class="stepper"><button class="up" aria-label="Scroll up"></button><b></b><button class="down" aria-label="Scroll down"></button></div>
      </div>
    </div>
  </section>

  <main class="workarea">
    <aside class="toolbox" aria-label="Toolbox">
      <button class="on" aria-label="Select"><svg><use href="#select"/></svg></button>
      <button aria-label="Lasso"><svg><use href="#lasso"/></svg></button>
      <button aria-label="Paint select"><svg><use href="#paint"/></svg></button>
      <button aria-label="Move"><svg><use href="#move"/></svg></button>
      <button aria-label="Rotate"><svg><use href="#rotate"/></svg></button>
      <button aria-label="Scale"><svg><use href="#scale"/></svg></button>
      <hr class="push">
      <button aria-label="Single view"><svg><use href="#lay1"/></svg></button>
      <button aria-label="Four views"><svg><use href="#lay4"/></svg></button>
      <button aria-label="Two views"><svg><use href="#lay2"/></svg></button>
      <button class="on" aria-label="Outliner layout"><svg><use href="#layout"/></svg></button>
      <hr>
      <button aria-label="Search"><svg><use href="#find"/></svg></button>
      <div class="brand"><svg aria-hidden="true"><use href="#logo"/></svg><span>M</span><small>AYA</small></div>
    </aside>

    <section class="outliner" aria-label="Outliner">
      <h2>Outliner</h2>
      <nav class="panel-menu"><button>Display</button><button>Show</button><button>Help</button></nav>
      <div class="search"><svg aria-hidden="true"><use href="#filter"/></svg><span><input type="search" aria-label="Search" placeholder="Search..."><svg><use href="#arrow"/></svg></span></div>
      <div class="tree">
        <ul>
          <li class="dim"><svg><use href="#cam"/></svg>persp</li>
          <li class="dim"><svg><use href="#cam"/></svg>top</li>
          <li class="dim"><svg><use href="#cam"/></svg>front</li>
          <li class="dim"><svg><use href="#cam"/></svg>side</li>
          <li><svg><use href="#set"/></svg>defaultLightSet</li>
          <li><svg><use href="#set"/></svg>defaultObjectSet</li>
        </ul>
        <div class="vscroll"><b class="up"></b><i></i><b class="down"></b></div>
      </div>
      <div class="hscroll"><b class="left"></b><i></i><b class="right"></b></div>
    </section>

    <section class="viewport" aria-label="Viewport">
      <nav class="panel-menu"><button>View</button><button>Shading</button><button>Lighting</button><button>Show</button><button>Renderer</button><button>Panels</button></nav>
      <div class="viewbar">
        <div class="viewtools">
          <i></i>
          <button aria-label="Select camera"><svg><use href="#cam"/></svg></button>
          <button aria-label="Lock camera"><svg><use href="#camlock"/></svg></button>
          <button aria-label="Camera attributes"><svg><use href="#camattr"/></svg></button>
          <button aria-label="Bookmarks"><svg><use href="#mark"/></svg></button>
          <button aria-label="Image plane"><svg><use href="#imgplane"/></svg></button>
          <button aria-label="Pan and zoom"><svg><use href="#panzoom"/></svg></button>
          <button class="pencil" aria-label="Blue pencil"><svg><use href="#grease"/></svg></button>
          <i></i>
          <button class="on" aria-label="Grid"><svg><use href="#gridon"/></svg></button>
          <button aria-label="Film gate"><svg><use href="#gate"/></svg></button>
          <button aria-label="Resolution gate"><svg><use href="#gate2"/></svg></button>
          <button aria-label="Gate mask"><svg><use href="#dimsq"/></svg></button>
          <button aria-label="Field chart"><svg><use href="#chart"/></svg></button>
          <button aria-label="Safe action"><svg><use href="#action"/></svg></button>
          <button aria-label="Safe title"><svg><use href="#title"/></svg></button>
          <i></i>
          <button aria-label="Wireframe"><svg><use href="#wire"/></svg></button>
          <button class="on" aria-label="Shaded"><svg><use href="#shade"/></svg></button>
          <button aria-label="Default material"><svg><use href="#half"/></svg></button>
          <button aria-label="Wireframe on shaded"><svg><use href="#tex"/></svg></button>
          <button aria-label="Textured"><svg><use href="#checker"/></svg></button>
          <button aria-label="Use lights"><svg><use href="#light"/></svg></button>
          <button aria-label="Shadows"><svg><use href="#shadow"/></svg></button>
          <i></i>
          <button aria-label="Ambient occlusion"><svg><use href="#ao"/></svg></button>
          <button aria-label="Motion blur"><svg><use href="#blur"/></svg></button>
          <button aria-label="Anti-aliasing"><svg><use href="#aa"/></svg></button>
          <button aria-label="Depth of field"><svg><use href="#dof"/></svg></button>
          <i></i>
          <button aria-label="Isolate select"><svg><use href="#isolate"/></svg></button>
          <i></i>
          <button aria-label="X-ray"><svg><use href="#xray"/></svg></button>
          <button aria-label="X-ray joints"><svg><use href="#xray2"/></svg></button>
          <button aria-label="X-ray components"><svg><use href="#xray3"/></svg></button>
          <i></i>
        </div>
        <label for="exposure" aria-label="Exposure"><svg><use href="#gear"/></svg></label><input id="exposure" value="0.00">
        <label for="gamma" aria-label="Gamma"><svg><use href="#contrast"/></svg></label><input id="gamma" value="1.00">
        <button class="on" aria-label="Color management"><svg><use href="#colormgt"/></svg></button>
        <select class="aces" aria-label="View transform"><option>ACES 1.0 SDR-video</option></select>
      </div>
      <div class="canvas">
        <svg class="scene" viewBox="193 122 494 386" aria-label="Perspective grid">
          <path id="grid" class="grid"/><path id="axis" class="axis"/>
        </svg>
        <svg class="viewcube" viewBox="0 0 56 60" aria-label="View cube">
          <circle cx="6" cy="6" r="2.300" fill="none" stroke="#ccc" stroke-width="1.500"/><path d="M4.500 9h3" stroke="#ccc"/>
          <path fill="#fff" d="M25 14.500 44 21 25 28.500 6 20z"/><path fill="#f2f2f2" d="M5.500 21.500 24 29.500V54L7 45z"/><path fill="#e4e4e4" d="M26 29.500 44.500 22 43 44 26 54z"/>
          <path fill="none" stroke="#444" d="M6 20.700 25 29l19-7.500M25 29v25"/>
          <g class="faces"><text transform="matrix(.9 .3 0 1 8 36)">FRONT</text><text transform="matrix(.9 -.3 0 1 28 42)">RIGHT</text><text transform="matrix(.8 .2 -.6 .5 21 21)">TOP</text></g>
          <path fill="none" stroke="#ddd" stroke-width="1.500" d="m49 51 3 3 3-3"/>
        </svg>
        <svg class="origin" viewBox="0 0 20 20" aria-label="World axes"><path stroke="#20d020" stroke-width="1.300" d="M9 13V3M8 2l1 1.500L10 2"/><path stroke="#e02020" stroke-width="1.300" d="m9 13 4 1M13 13l3 2M16 13l-3 2"/><path stroke="#2020d8" stroke-width="1.300" fill="none" d="m9 13-4 1M1 13h3l-3 2h3"/></svg>
        <span class="camera-name">persp</span>
      </div>
    </section>

    <section class="channels" aria-label="Channel box">
      <div class="channel-icons"><button aria-label="Manipulators"><svg><use href="#axes"/></svg></button><button aria-label="Speed"><svg><use href="#dial"/></svg></button><button aria-label="Graph"><svg><use href="#graph"/></svg></button></div>
      <nav class="panel-menu"><button>Channels</button><button>Edit</button><button>Object</button><button>Show</button></nav>
      <p class="hint">Select objects in the scene to view,<br>edit and set keyframes on channels<br>(attributes)</p>
      <hr class="splitter">
      <div class="layers">
        <div class="tabs"><button class="current">Display</button><button>Anim</button></div>
        <nav class="panel-menu"><button>Layers</button><button>Options</button><button>Help</button></nav>
        <div class="layer-icons"><button aria-label="Move layer up"><svg><use href="#layer"/></svg></button><button aria-label="Move layer down"><svg><use href="#layer"/></svg></button><button aria-label="Empty layer"><svg><use href="#layerup"/></svg></button><button aria-label="Layer from selected"><svg><use href="#layerup"/></svg></button></div>
        <div class="layer-list"></div>
        <div class="hscroll"><b class="left"></b><i class="short"></i><b class="right"></b></div>
      </div>
    </section>

    <nav class="side-tabs" aria-label="Side tabs"><button class="current">Channel Box / Layer Editor</button><button>Attribute Editor</button><button>Modeling Toolkit</button></nav>
  </main>

  <section class="timeline" aria-label="Time slider">
    <div class="track">
      <output class="playhead">1</output>
      <ol><li>5</li><li>10</li><li>15</li><li>20</li><li>25</li><li>30</li><li>35</li><li>40</li><li>45</li><li>50</li><li>55</li><li>60</li><li>65</li><li>70</li><li>75</li><li>80</li><li>85</li><li>90</li><li>95</li><li>100</li><li>105</li><li>110</li><li>115</li><li>120</li></ol>
    </div>
    <input class="frame" aria-label="Current frame" value="1">
    <div class="playback">
      <button aria-label="Go to start"><svg><use href="#pfirst"/></svg></button>
      <button aria-label="Step back"><svg><use href="#pprev"/></svg></button>
      <button aria-label="Previous key"><svg><use href="#pkey"/></svg></button>
      <button class="flip" aria-label="Play backwards"><svg><use href="#pplay"/></svg></button>
      <button aria-label="Play forwards"><svg><use href="#pplay"/></svg></button>
      <button class="flip" aria-label="Next key"><svg><use href="#pkey"/></svg></button>
      <button class="flip" aria-label="Step forward"><svg><use href="#pprev"/></svg></button>
      <button class="flip" aria-label="Go to end"><svg><use href="#pfirst"/></svg></button>
    </div>
  </section>

  <section class="range" aria-label="Range slider">
    <input class="frame" aria-label="Animation start" value="1">
    <input class="frame" aria-label="Playback start" value="1">
    <div class="range-track"><div class="range-thumb"><b></b><span>1</span><span>120</span><b></b></div></div>
    <input class="frame" aria-label="Playback end" value="120">
    <input class="frame" aria-label="Animation end" value="200">
    <i class="bar"></i>
    <button aria-label="Auto key"><svg><use href="#autokey"/></svg></button>
    <i class="bar wide"></i>
    <button class="mini" aria-label="Character menu"><svg><use href="#caret"/></svg></button>
    <input class="readout" aria-label="Character set" value="No Character Set" readonly>
    <button class="mini" aria-label="Layer menu"><svg><use href="#caret"/></svg></button>
    <input class="readout" aria-label="Animation layer" value="No Anim Layer" readonly>
    <i class="bar wide"></i>
    <span class="select fps"><select aria-label="Frame rate"><option>24 fps</option></select><svg><use href="#arrow"/></svg></span>
    <div class="range-icons">
      <button aria-label="Loop"><svg><use href="#loop"/></svg></button>
      <button class="on" aria-label="Cached playback"><svg><use href="#cached"/></svg></button>
      <i class="bar"></i>
      <button aria-label="Sound"><svg><use href="#sound"/></svg></button>
      <button aria-label="Time settings"><svg><use href="#time"/></svg></button>
      <button aria-label="Preferences"><svg><use href="#run"/></svg></button>
    </div>
  </section>

  <footer class="command">
    <div class="help-line"><button aria-label="Help"><svg><use href="#help"/></svg></button></div>
    <label for="mel">MEL</label>
    <input id="mel">
    <output class="warning">// Warning: file: C:/Program Files/Autodesk/Maya2023/scripts/others/supportRenderers.mel line 67: The</output>
    <button aria-label="Script editor"><svg><use href="#script"/></svg></button>
  </footer>
</div>
<script src="grid.js"></script>
</body>
</html>
```
FILE: grid.js
```js
// Draws the ground plane: a unit square seen in perspective, split into cells.
const CELLS = 24;

function project(u, v) {
  const w = 1 + 0.492 * (u + v);
  const x = (440 - 54.3 * u + 487.3 * v) / w;
  const y = (442 + 28 * (u + v)) / w;
  return x.toFixed(1) + ' ' + y.toFixed(1);
}

function lines(t) {
  return 'M' + project(t, 0) + 'L' + project(t, 1) +
         'M' + project(0, t) + 'L' + project(1, t);
}

let cells = '';
for (let i = 0; i <= CELLS; i++) cells += lines(i / CELLS);
document.getElementById('grid').setAttribute('d', cells);
document.getElementById('axis').setAttribute('d', lines(0.5));
```
FILE: styles.css
```css
* { box-sizing: border-box; }

body {
  margin: 0;
  background: #23233a;
  color: #ccc;
  font: 7px/10px "Open Sans", "Noto Sans", sans-serif;
}

button, input, select {
  margin: 0;
  padding: 0;
  border: 0;
  border-radius: 0;
  background: none;
  color: inherit;
  font: inherit;
  appearance: none;
  outline: 0;
}

button { display: flex; align-items: center; justify-content: center; white-space: nowrap; flex: none; }
input { min-width: 0; height: 12px; padding: 0 4px; background: #2b2b2b; border-radius: 1px; }
svg { display: block; width: 12px; height: 12px; flex: none; }
.sprite { position: absolute; width: 0; height: 0; }
.on { background: #4a86ae; }
.push { margin-left: auto; }

.window {
  display: flex;
  flex-direction: column;
  height: 100vh;
  min-height: 520px;
  overflow: hidden;
  border-top: 1px solid #77778a;
  border-radius: 0 4px 0 4px;
  background: #444;
}

.titlebar { display: flex; align-items: center; height: 18px; padding-left: 6px; background: #fff; color: #222; }
.titlebar h1 { flex: 1; margin: 0 0 0 3px; font-size: 7px; font-weight: 400; }
.titlebar .app-icon { width: 9px; height: 9px; }
.titlebar button { width: 28px; height: 18px; }
.titlebar button svg { width: 8px; height: 8px; fill: none; stroke: #222; stroke-width: 1; }

.menubar { display: flex; align-items: center; gap: 8px; height: 17px; padding: 0 4px; }
.menubar .home { margin-left: 1px; }
.menubar .home svg { width: 10px; height: 10px; }
.workspace-label { margin-left: auto; }
.workspace-label + .select { margin-left: -5px; }
.menubar .lock { margin-left: -5px; }
.menubar .lock svg { width: 10px; height: 10px; }

.select { position: relative; display: flex; align-items: center; height: 12px; background: #5a5a5a; border-radius: 1px; }
.select select { flex: 1; min-width: 0; height: 12px; padding-left: 2px; }
.select svg { width: 6px; height: 6px; margin: 0 3px; pointer-events: none; }
.select .lead { width: 9px; height: 9px; }
.workspace { width: 116px; }
.mode { width: 60px; }
.signin { width: 73px; color: #fff; }

.statusline { display: flex; align-items: center; height: 17px; padding: 0 2px 0 9px; border-bottom: 1px solid #3a3a3a; }
.statusline button { width: 14px; height: 14px; }
.statusline svg { width: 12px; height: 12px; }
.statusline .select svg { width: 7px; height: 7px; }
.statusline .select .lead { width: 9px; height: 9px; }
.bar { position: relative; flex: none; width: 14px; height: 10px; background: linear-gradient(#888, #888) center / 1px 100% no-repeat; }
.bar.end::after { content: ""; position: absolute; top: 3px; left: 7px; border: 2px solid transparent; border-left-color: #888; border-right: 0; }
.statusline .mini, .range .mini { width: 10px; }
.mini svg { width: 6px; height: 6px; }
.readout { width: 60px; background: #404040; padding: 0 2px; }

.shelf { display: flex; height: 42px; padding: 2px 0 0 9px; border-bottom: 1px solid #353535; }
.shelf-side { display: flex; flex-direction: column; justify-content: space-around; width: 13px; background: #3a3a3a; }
.shelf-side button { height: 10px; }
.dash { width: 6px; height: 2px; background: #aaa; }
.ring { width: 6px; height: 6px; border: 1px solid #ccc; border-radius: 50%; }
.shelf-body { flex: 1; min-width: 0; }
.tabs { display: flex; background: #373737; color: #888; }
.tabs button { height: 12px; padding: 0 6px 0 7px; background: #3d3d3d; box-shadow: inset -1px 0 #363636; }
.tabs .current { background: #444; color: #eee; font-weight: 600; }
.shelf-row { display: flex; align-items: center; height: 26px; padding-left: 3px; }
.tools { display: flex; align-items: center; flex: 1; height: 22px; }
.tools button { position: relative; flex: 1; min-width: 0; height: 22px; }
.tools svg { width: 15px; height: 15px; }
.tools i { flex: none; width: 7px; height: 20px; background: linear-gradient(#888, #888) center / 1px 100% no-repeat; }
.more::after { content: ""; position: absolute; right: 1px; bottom: 2px; border: 2px solid; border-color: transparent #ddd #ddd transparent; }
.svg-tool span { position: absolute; color: #333; font-size: 6px; font-weight: 700; }
.fresh::before, .fresh::after { content: ""; position: absolute; top: 1px; bottom: 1px; width: 3px; border: 1px solid #3cc83c; }
.tools .fresh::before { left: 0; border-right: 0; }
.tools .fresh::after { right: 0; border-left: 0; }
.stepper { display: flex; flex-direction: column; align-items: center; justify-content: space-around; width: 10px; height: 20px; margin: 0 4px 0 2px; border-left: 1px solid #888; background: #3a3a3a; }
.stepper b { width: 6px; height: 6px; border-radius: 50%; background: #555; }

.up, .down, .left, .right { flex: none; width: 0; height: 0; border: 3px solid transparent; }
.up { border-top-width: 0; border-bottom-color: #ddd; }
.down { border-bottom-width: 0; border-top-color: #ddd; }
.left { border-left-width: 0; border-right-color: #ddd; }
.right { border-right-width: 0; border-left-color: #ddd; }

.workarea { display: flex; flex: 1; min-height: 0; padding-top: 1px; border-bottom: 2px solid #373737; }

.toolbox { display: flex; flex-direction: column; align-items: center; width: 28px; padding: 7px 0 4px; border-right: 1px solid #383838; }
.toolbox button { width: 22px; height: 22px; }
.toolbox svg { width: 20px; height: 20px; }
.toolbox hr { width: 22px; margin: 3px 0; border: 0; border-top: 2px solid #888; }
.toolbox hr.push { margin-top: auto; }
.brand { position: relative; width: 18px; height: 18px; margin-top: 80px; }
.brand svg { width: 18px; height: 18px; }
.brand span { position: absolute; inset: 2px 0 auto 3px; color: #fff; font-size: 10px; font-weight: 700; text-align: center; }
.brand small { position: absolute; inset: auto 0 0 3px; color: #fff; font-size: 3px; line-height: 4px; text-align: center; }

.panel-menu { display: flex; gap: 9px; height: 12px; align-items: center; }

.outliner { display: flex; flex-direction: column; width: 163px; padding: 0 2px 2px 3px; background: #444; border-right: 2px solid #3a3a3a; }
.outliner h2 { align-self: flex-start; width: 38px; height: 11px; margin: 1px 0 0; color: #eee; font-size: 7px; font-weight: 600; line-height: 10px; text-align: center; }
.outliner .panel-menu { padding-left: 4px; }
.search { display: flex; align-items: center; margin-top: 3px; padding-left: 3px; }
.search > svg { width: 8px; height: 8px; margin-right: 5px; }
.search span { display: flex; align-items: center; flex: 1; padding-right: 3px; background: #2b2b2b; }
.search input { flex: 1; padding: 0 2px; height: 11px; }
.search input::placeholder { color: #888; }
.search span svg { width: 6px; height: 6px; }
.tree { display: flex; flex: 1; min-height: 0; }
.tree ul { flex: 1; margin: 0; padding: 2px 0 0 21px; background: #373737; list-style: none; }
.tree li { display: flex; align-items: center; gap: 2px; height: 12px; color: #ddd; }
.tree li svg { width: 10px; height: 10px; }
.tree .dim { color: #606060; }
.vscroll { display: flex; flex-direction: column; align-items: center; gap: 2px; width: 8px; padding: 3px 0; background: #3a3a3a; }
.vscroll i { flex: 1; width: 6px; background: #5a5a5a; border-radius: 2px; }
.hscroll { display: flex; align-items: center; gap: 2px; height: 12px; padding: 0 10px 0 2px; background: #3a3a3a; }
.hscroll i { flex: 1; height: 6px; background: #5a5a5a; border-radius: 2px; }

.viewport { display: flex; flex-direction: column; flex: 1; min-width: 0; border: 1px solid #777; }
.viewport .panel-menu { padding-left: 6px; }
.viewbar { display: flex; align-items: center; height: 12px; }
.viewtools { display: flex; align-items: center; flex: 1; min-width: 0; }
.viewtools button { flex: 1; min-width: 0; height: 12px; }
.viewbar svg { width: 10px; height: 10px; }
.viewbar .pencil svg { width: 12px; height: 12px; }
.viewtools i { flex: none; width: 7px; height: 8px; background: linear-gradient(#888, #888) center / 1px 100% no-repeat; }
.viewbar label { display: flex; justify-content: center; width: 13px; }
.viewbar input { width: 24px; height: 11px; padding: 0 2px; }
.viewbar > .on { width: 11px; height: 11px; margin: 0 2px; }
.aces { width: 26px; height: 12px; padding-left: 2px; overflow: hidden; background: #5a5a5a; text-overflow: clip; white-space: nowrap; }
.canvas { position: relative; flex: 1; min-height: 0; background: #5d5d5d; }
.scene { position: absolute; inset: 0; width: 100%; height: 100%; }
.grid, .axis { fill: none; stroke: #404040; stroke-width: .7; }
.axis { stroke: #353535; stroke-width: 1; }
.viewcube { position: absolute; top: 1px; right: 5px; width: 56px; height: 60px; }
.faces { fill: #777; font-size: 4px; font-weight: 700; }
.origin { position: absolute; left: 6px; bottom: 9px; width: 20px; height: 20px; }
.camera-name { position: absolute; inset: auto 0 3px 0; padding-right: 8px; color: #eee; font-weight: 700; text-align: center; }

.channels { display: flex; flex-direction: column; width: 163px; padding: 0 3px 2px 4px; border-left: 2px solid #3a3a3a; }
.channel-icons { display: flex; justify-content: flex-end; gap: 4px; height: 12px; padding-right: 1px; }
.channel-icons svg, .layer-icons svg { width: 9px; height: 9px; }
.channels > .panel-menu { height: 14px; padding-left: 3px; }
.hint { flex: 1; display: flex; align-items: center; justify-content: center; margin: 0; color: #eee; line-height: 8px; text-align: center; }
.splitter { width: 54px; margin: 0 auto 5px; border: 0; border-top: 1px solid #5a5a5a; }
.layers { display: flex; flex-direction: column; height: 202px; border-right: 1px solid #3a3a3a; }
.layers .panel-menu { padding-left: 4px; }
.layers .tabs button { height: 11px; padding: 0 5px; background: none; box-shadow: none; }
.layers .tabs button.current { margin-right: 5px; background: #444; }
.layer-icons { display: flex; align-items: center; justify-content: flex-end; gap: 5px; height: 16px; padding: 0 5px 4px 0; }
.layer-list { flex: 1; margin: 0 2px; background: #2b2b2b; }
.layers .hscroll { padding: 0 3px; }
.layers .hscroll .short { flex: none; width: 66%; margin-right: auto; }

.side-tabs { display: flex; flex-direction: column; width: 9px; background: #393939; color: #888; }
.side-tabs button { height: 62px; writing-mode: vertical-rl; }
.side-tabs button:last-child { height: 70px; }
.side-tabs .current { height: 95px; background: #444; color: #eee; }

.timeline { display: flex; align-items: center; height: 25px; padding: 0 5px 0 9px; border-bottom: 1px solid #3a3a3a; }
.track { display: flex; flex: 1; min-width: 0; height: 21px; overflow: hidden; background: #2b2b2b; }
.playhead { align-self: stretch; width: 5px; margin: 1px 16px 1px 3px; background: #555; color: #fff; font-weight: 700; line-height: 24px; }
.track ol { display: flex; flex: 1; min-width: 0; margin: 0; padding: 0; list-style: none; }
.track li { flex: 0 0 calc(300% / 70); height: 20px; color: #888; line-height: 9px; background: linear-gradient(#aaa, #aaa) left 0 bottom 2px / 1px 9px no-repeat; padding-left: 1px; }
.frame { width: 54px; height: 14px; flex: none; }
.timeline .frame { margin: 0 4px 0 5px; height: 12px; }
.playback { display: flex; }
.playback button { width: 14px; }
.playback svg { width: 12px; height: 12px; }
.flip svg { transform: scaleX(-1); }

.range { display: flex; align-items: center; gap: 4px; height: 23px; padding: 0 6px 0 9px; border-bottom: 1px solid #3a3a3a; }
.range-track { flex: 1; min-width: 0; height: 14px; background: #393939; }
.range-thumb { display: flex; align-items: center; gap: 3px; width: 62%; height: 12px; margin: 1px; padding: 0 2px; background: #5a5a5a; border-radius: 2px; }
.range-thumb b { width: 9px; height: 9px; background: #999; border-radius: 2px; }
.range-thumb span { flex: 1; }
.range-thumb span + span { text-align: right; }
.range .bar { width: 2px; }
.range .wide { width: 8px; }
.fps { width: 58px; }
.range-icons { display: flex; align-items: center; gap: 5px; margin-left: 4px; }
.range-icons .on { width: 14px; height: 14px; }

.command { display: flex; align-items: center; height: 20px; padding-right: 5px; }
.help-line { flex: 1; padding-left: 9px; border-right: 1px solid #3a3a3a; }
.help-line svg { width: 10px; height: 10px; }
.command label { margin: 0 8px 0 14px; color: #eee; }
.command > input { width: 106px; height: 13px; }
.warning { width: 38%; height: 13px; margin: 0 4px; padding: 0 3px; overflow: hidden; background: #dcd080; color: #333; font-family: Roboto, "Open Sans", sans-serif; line-height: 13px; white-space: nowrap; }
```
